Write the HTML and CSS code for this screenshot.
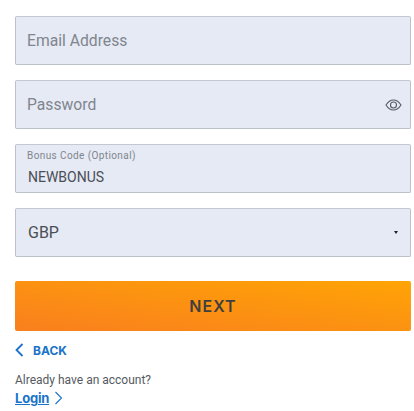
FILE: index.html
```html
<!DOCTYPE html>
<html lang="en">
<head>
<meta charset="UTF-8">
<meta name="viewport" content="width=device-width,initial-scale=1">
<title>Sign up</title>
<link rel="stylesheet" href="styles.css">
</head>
<body>
<form class="signup">
<div class="field"><span class="placeholder">Email Address</span></div>
<div class="field">
<span class="placeholder">Password</span>
<svg class="eye" width="17" height="12" viewBox="0 0 17 12" fill="none" stroke="#555b66" stroke-width="1.1">
<path d="M1 6C3 2.8 5.500 1 8.500 1S14 2.8 16 6c-2 3.2-4.500 5-7.500 5S3 9.200 1 6Z"/>
<circle cx="8.500" cy="6" r="3"/>
</svg>
</div>
<div class="field filled">
<span class="label">Bonus Code (Optional)</span>
<span class="value">NEWBONUS</span>
</div>
<div class="field select">
<span class="selected">GBP</span>
<span class="caret"></span>
</div>
<button class="next" type="button">NEXT</button>
<a class="back" href="#">
<svg width="9" height="14" viewBox="0 0 9 14" fill="none" stroke="#1a73c8" stroke-width="1.800"><path d="M7.500 1 1.500 7l6 6"/></svg>
BACK
</a>
<p class="have-account">Already have an account?</p>
<a class="login" href="#"><span class="login-text">Login</span>
<svg width="9" height="14" viewBox="0 0 9 14" fill="none" stroke="#1a73c8" stroke-width="1.100"><path d="M1.500 1 7.500 7l-6 6"/></svg>
</a>
</form>
</body>
</html>
```

FILE: styles.css
```css
*{margin:0;padding:0;box-sizing:border-box}
body{font-family:Roboto,"Liberation Sans",sans-serif;background:#fff;color:#3d4148}
.signup{padding:16px 3px 0 15px;display:flex;flex-direction:column}
.field{height:49px;margin-bottom:15px;background:#e6eaf4;border:1px solid #bcc0c8;border-top-color:#c4c8d0;border-radius:2px;padding:0 11px;display:flex;align-items:center;justify-content:space-between}
.placeholder{font-size:15.7px;color:#80858e}
.eye{margin-right:-3px}
.filled{flex-direction:column;align-items:flex-start;justify-content:flex-start;padding-top:5px}
.label{font-size:10px;line-height:12px;letter-spacing:.4px;color:#80858e}
.value{font-size:14px;line-height:16px;margin:7px 0 0 1px;color:#4a4e56}
.selected{font-size:16px;margin-left:1px;color:#4a4e56}
.caret{width:0;height:0;border-left:2.500px solid transparent;border-right:2.500px solid transparent;border-top:3px solid #222;margin-right:1px}
.select{margin-bottom:24px}
.next{height:50px;border:none;border-radius:2px;background:linear-gradient(to top right,#f97f1e,#ffa405);font-family:Inter,Roboto,sans-serif;font-size:16px;font-weight:600;letter-spacing:1px;color:#3f3f3f}
.back{display:flex;align-items:center;gap:9px;margin-top:11px;font-family:Inter,Roboto,sans-serif;font-size:12px;font-weight:700;color:#1a73c8;text-decoration:none;height:16px}
.have-account{font-size:12px;line-height:14px;margin-top:15px;color:#555a62}
.login{display:flex;align-items:center;gap:5px;margin-top:2px;font-family:Inter,Roboto,sans-serif;font-size:13px;font-weight:700;letter-spacing:-.2px;color:#1a73c8;height:18px;text-decoration:none}
.login-text{text-decoration:underline}
```
